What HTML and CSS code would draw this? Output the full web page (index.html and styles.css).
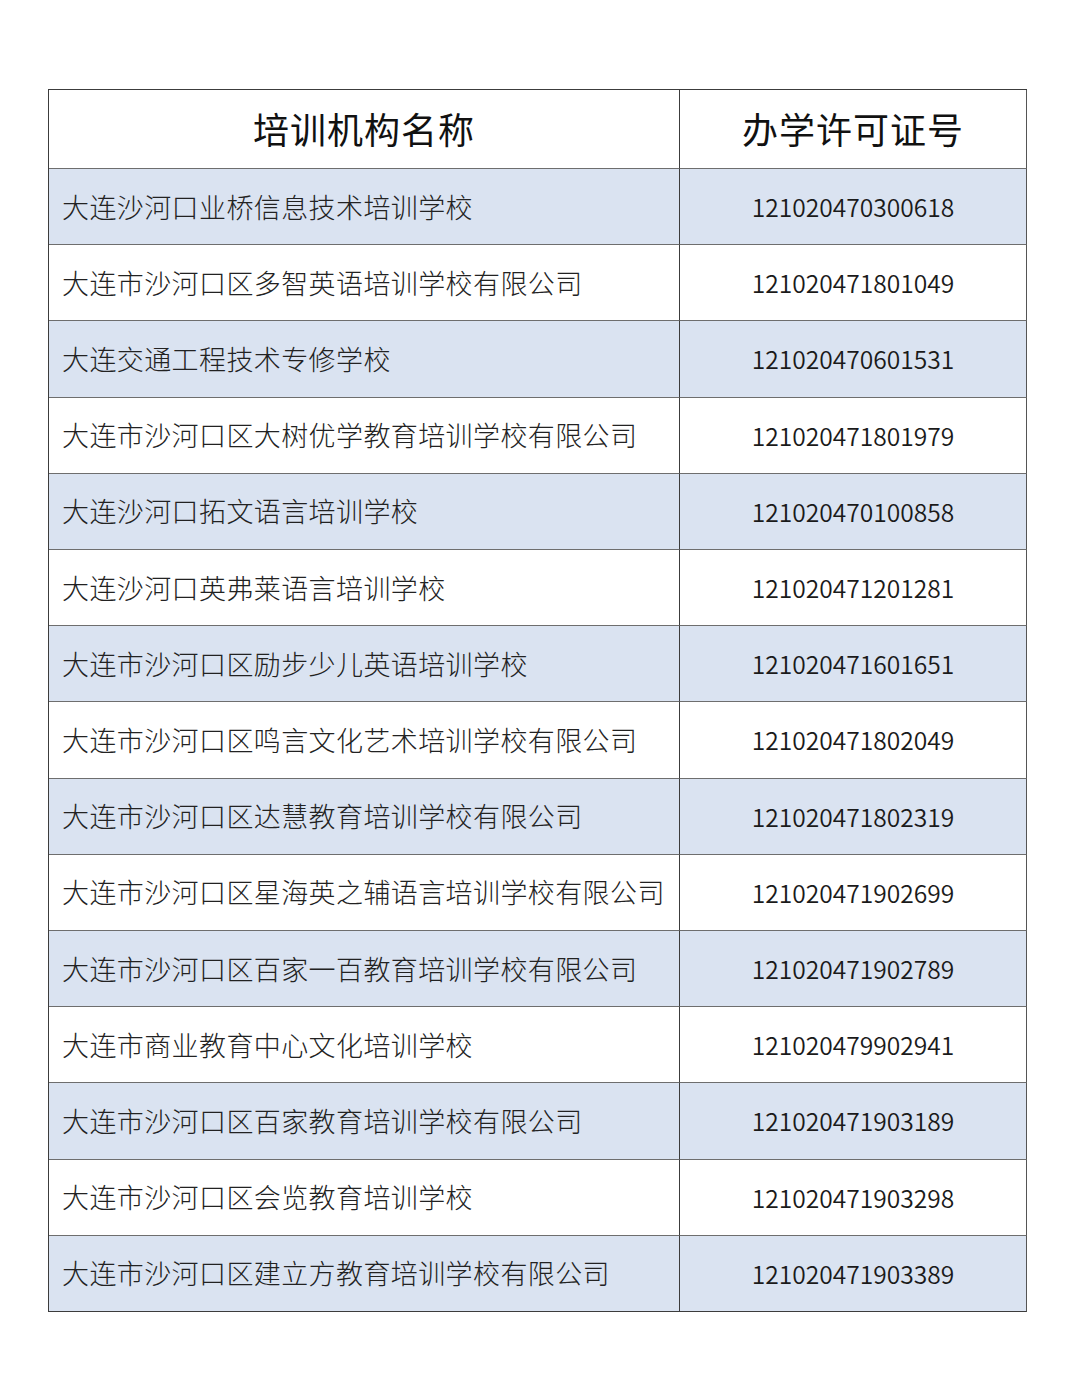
FILE: index.html
```html
<!DOCTYPE html>
<html lang="zh-CN">
<head>
<meta charset="utf-8">
<title>培训机构名单</title>
<link rel="stylesheet" href="styles.css">
</head>
<body>
<div class="table">
  <div class="cell head">培训机构名称</div>
  <div class="cell head last">办学许可证号</div>

  <div class="cell name alt">大连沙河口业桥信息技术培训学校</div>
  <div class="cell num alt last">121020470300618</div>

  <div class="cell name">大连市沙河口区多智英语培训学校有限公司</div>
  <div class="cell num last">121020471801049</div>

  <div class="cell name alt">大连交通工程技术专修学校</div>
  <div class="cell num alt last">121020470601531</div>

  <div class="cell name">大连市沙河口区大树优学教育培训学校有限公司</div>
  <div class="cell num last">121020471801979</div>

  <div class="cell name alt">大连沙河口拓文语言培训学校</div>
  <div class="cell num alt last">121020470100858</div>

  <div class="cell name">大连沙河口英弗莱语言培训学校</div>
  <div class="cell num last">121020471201281</div>

  <div class="cell name alt">大连市沙河口区励步少儿英语培训学校</div>
  <div class="cell num alt last">121020471601651</div>

  <div class="cell name">大连市沙河口区鸣言文化艺术培训学校有限公司</div>
  <div class="cell num last">121020471802049</div>

  <div class="cell name alt">大连市沙河口区达慧教育培训学校有限公司</div>
  <div class="cell num alt last">121020471802319</div>

  <div class="cell name">大连市沙河口区星海英之辅语言培训学校有限公司</div>
  <div class="cell num last">121020471902699</div>

  <div class="cell name alt">大连市沙河口区百家一百教育培训学校有限公司</div>
  <div class="cell num alt last">121020471902789</div>

  <div class="cell name">大连市商业教育中心文化培训学校</div>
  <div class="cell num last">121020479902941</div>

  <div class="cell name alt">大连市沙河口区百家教育培训学校有限公司</div>
  <div class="cell num alt last">121020471903189</div>

  <div class="cell name">大连市沙河口区会览教育培训学校</div>
  <div class="cell num last">121020471903298</div>

  <div class="cell name alt bottom">大连市沙河口区建立方教育培训学校有限公司</div>
  <div class="cell num alt last bottom">121020471903389</div>
</div>
</body>
</html>
```

FILE: styles.css
```css
html, body {
  margin: 0;
  padding: 0;
  background: #ffffff;
}

body {
  padding: 89px 0 0 48px;
  font-family: "Noto Sans CJK SC", "Noto Sans", sans-serif;
  color: #1a1a1a;
}

.table {
  width: 979px;
  height: 1223px;
  box-sizing: border-box;
  border-top: 1px solid #3c3c3c;
  border-left: 1px solid #3c3c3c;
  display: grid;
  grid-template-columns: 631px 1fr;
  grid-template-rows: 79px repeat(15, 1fr);
}

.cell {
  display: flex;
  align-items: center;
  border-right: 1px solid #3c3c3c;
  border-bottom: 1px solid #6e6e6e;
  box-sizing: border-box;
}

.cell.last {
  border-right-color: #555555;
}

.cell.bottom {
  border-bottom-color: #3c3c3c;
}

.head {
  justify-content: center;
  font-size: 36px;
  font-weight: 400;
  letter-spacing: 1px;
  color: #111111;
  padding-bottom: 2px;
}

.name {
  padding-left: 13px;
  font-size: 27px;
  font-weight: 300;
  letter-spacing: 0.4px;
  color: #222222;
  padding-bottom: 1px;
}

.num {
  justify-content: center;
  font-size: 24.6px;
  font-weight: 350;
  color: #1a1a1a;
  padding-bottom: 1px;
}

.alt {
  background: #dae3f1;
}
```
